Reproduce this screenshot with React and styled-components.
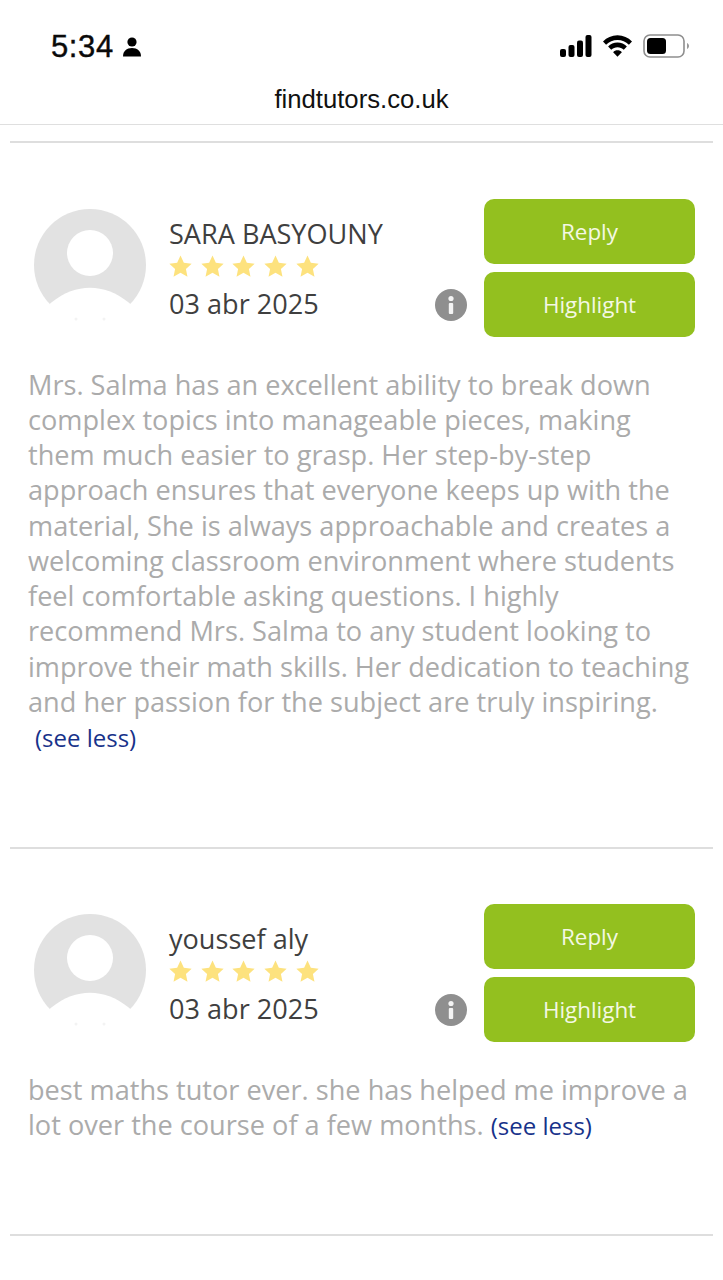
import React from "react";
import styled, { createGlobalStyle } from "styled-components";

const GlobalStyle = createGlobalStyle`
  html, body {
    margin: 0;
    padding: 0;
    background: #fff;
  }
  body {
    font-family: "Open Sans", "Liberation Sans", sans-serif;
  }
`;

const Page = styled.div`
  width: 723px;
  height: 1280px;
  overflow: hidden;
  background: #fff;
`;

const StatusBar = styled.div`
  height: 84px;
  box-sizing: border-box;
  padding: 27px 34px 0 51px;
  display: flex;
  align-items: flex-start;
  justify-content: space-between;
`;

const Time = styled.div`
  display: flex;
  align-items: center;
  gap: 8px;
  height: 38px;
  padding-top: 1px;
  font-family: "Liberation Sans", Arial, sans-serif;
  font-size: 31px;
  letter-spacing: 0.6px;
  -webkit-text-stroke: 0.4px #0a0a0a;
  color: #0a0a0a;
`;

const StatusIcons = styled.div`
  display: flex;
  align-items: center;
  gap: 11px;
  height: 38px;
`;

const AddressBar = styled.div`
  height: 41px;
  box-sizing: border-box;
  display: flex;
  align-items: center;
  justify-content: center;
  font-family: "Liberation Sans", Arial, sans-serif;
  font-size: 25.7px;
  color: #111;
  border-bottom: 1px solid #dfdfdf;
  padding-bottom: 9px;
`;

const Divider = styled.hr`
  margin: ${(p) => p.$top}px 10px 0 10px;
  border: 0;
  height: 2px;
  background: #dedede;
`;

const Review = styled.section`
  padding: ${(p) => p.$top}px 28px 0 28px;
  height: ${(p) => p.$height}px;
  box-sizing: border-box;
`;

const Head = styled.div`
  display: flex;
  align-items: flex-start;
  height: 138px;
`;

const Avatar = styled.svg`
  width: 112px;
  height: 122px;
  margin: 10px 0 0 6px;
  flex: none;
`;

const Info = styled.div`
  margin-left: 23px;
  width: 267px;
  padding-top: 16px;
`;

const Name = styled.div`
  font-size: 27.1px;
  line-height: 38px;
  color: #3f3f3f;
`;

const Stars = styled.div`
  display: flex;
  gap: 6.7px;
  height: 27px;
  margin-left: -1px;
  align-items: center;
`;

const DateLine = styled.div`
  font-size: 27.1px;
  line-height: 42px;
  color: #3f3f3f;
  margin-top: 3px;
`;

const InfoBadge = styled.svg`
  width: 32px;
  height: 32px;
  flex: none;
  margin: 90px 17px 0 0;
`;

const Buttons = styled.div`
  display: flex;
  flex-direction: column;
  gap: 8px;
`;

const Action = styled.div`
  width: 211px;
  height: 65px;
  box-sizing: border-box;
  padding-bottom: 1px;
  border-radius: 10px;
  background: #93c01f;
  color: #f4f8e4;
  font-size: 22.4px;
  display: flex;
  align-items: center;
  justify-content: center;
`;

const Body = styled.p`
  margin: 29.5px 0 0 0;
  font-size: 27.15px;
  line-height: 35.25px;
  color: #ababab;
`;

const SeeLess = styled.span`
  font-size: 24px;
  color: #17328a;
  margin-left: ${(p) => p.$indent}px;
`;

const reviews = [
  {
    name: "SARA BASYOUNY",
    date: "03 abr 2025",
    top: 56,
    height: 704,
    lines: [
      "Mrs. Salma has an excellent ability to break down",
      "complex topics into manageable pieces, making",
      "them much easier to grasp. Her step-by-step",
      "approach ensures that everyone keeps up with the",
      "material, She is always approachable and creates a",
      "welcoming classroom environment where students",
      "feel comfortable asking questions. I highly",
      "recommend Mrs. Salma to any student looking to",
      "improve their math skills. Her dedication to teaching",
      "and her passion for the subject are truly inspiring.",
    ],
    breakBefore: true,
  },
  {
    name: "youssef aly",
    date: "03 abr 2025",
    top: 55,
    height: 385,
    lines: [
      "best maths tutor ever. she has helped me improve a",
      "lot over the course of a few months.",
    ],
    breakBefore: false,
  },
];

function Star() {
  return (
    <svg width="25" height="25" viewBox="0 0 24 24">
      <path
        d="M12 1.5l3.2 6.9 7.5.9-5.5 5.1 1.5 7.4L12 18.1l-6.7 3.7 1.5-7.4L1.3 9.3l7.5-.9z"
        fill="#fde27e"
      />
    </svg>
  );
}

function ReviewCard({ review }) {
  return (
    <Review $top={review.top} $height={review.height}>
      <Head>
        <Avatar viewBox="0 0 112 122">
          <circle cx="56" cy="56" r="56" fill="#e2e2e2" />
          <circle cx="56" cy="44" r="23" fill="#fff" />
          <path d="M0 122V108L18 93C42 74 70 74 94 93L112 108V122z" fill="#fff" />
          <circle cx="42" cy="110" r="1.500" fill="#f3f3f3" />
          <circle cx="70" cy="110" r="1.500" fill="#f3f3f3" />
        </Avatar>
        <Info>
          <Name>{review.name}</Name>
          <Stars>
            {[0, 1, 2, 3, 4].map((i) => (
              <Star key={i} />
            ))}
          </Stars>
          <DateLine>{review.date}</DateLine>
        </Info>
        <InfoBadge viewBox="0 0 32 32">
          <circle cx="16" cy="16" r="16" fill="#8f8f8f" />
          <circle cx="16" cy="9.500" r="2.600" fill="#f4f4f4" />
          <rect x="13.800" y="14" width="4.400" height="11" rx="1" fill="#f4f4f4" />
        </InfoBadge>
        <Buttons>
          <Action>Reply</Action>
          <Action>Highlight</Action>
        </Buttons>
      </Head>
      <Body>
        {review.lines.map((line, i) => (
          <React.Fragment key={i}>
            {line}
            {i < review.lines.length - 1 || review.breakBefore ? <br /> : " "}
          </React.Fragment>
        ))}
        <SeeLess $indent={review.breakBefore ? 7 : 0}>(see less)</SeeLess>
      </Body>
    </Review>
  );
}

export default function App() {
  return (
    <Page>
      <GlobalStyle />
      <StatusBar>
        <Time>
          5:34
          <svg width="20" height="20" viewBox="0 0 20 20">
            <circle cx="10" cy="5" r="4.600" fill="#000" />
            <path d="M1 19.500c0-5.500 3.600-8.500 9-8.500s9 3 9 8.500z" fill="#000" />
          </svg>
        </Time>
        <StatusIcons>
          <svg width="32" height="22" viewBox="0 0 32 22">
            <rect x="0" y="14" width="6" height="8" rx="2" fill="#000" />
            <rect x="8.500" y="10" width="6" height="12" rx="2" fill="#000" />
            <rect x="17" y="5.500" width="6" height="16.500" rx="2" fill="#000" />
            <rect x="25.500" y="0" width="6" height="22" rx="2" fill="#000" />
          </svg>
          <svg width="29" height="22" viewBox="0 0 30 22">
            <path d="M15 0C9 0 4 2.400 0 6.300l3.200 3.400C6.400 6.500 10.400 4.800 15 4.800s8.600 1.700 11.800 4.900L30 6.300C26 2.400 21 0 15 0z" fill="#000" />
            <path d="M15 7.500C11.200 7.500 7.800 9 5.300 11.500l3.200 3.400C10.200 13.200 12.500 12.300 15 12.300s4.800.9 6.500 2.600l3.200-3.400C22.200 9 18.800 7.500 15 7.500z" fill="#000" />
            <path d="M15 15.500c-1.800 0-3.400.7-4.500 1.900L15 22l4.500-4.600c-1.100-1.200-2.700-1.900-4.500-1.900z" fill="#000" />
          </svg>
          <svg width="46" height="24" viewBox="0 0 46 24">
            <rect x="1" y="1" width="40" height="22" rx="6" fill="none" stroke="#8e8e8e" strokeWidth="1.600" />
            <rect x="4" y="4" width="19" height="16" rx="3.500" fill="#000" />
            <path d="M44 9c1.200.5 2 1.600 2 3s-.8 2.500-2 3z" fill="#9a9a9a" />
          </svg>
        </StatusIcons>
      </StatusBar>
      <AddressBar>findtutors.co.uk</AddressBar>
      <Divider $top={16} />
      <ReviewCard review={reviews[0]} />
      <Divider $top={0} />
      <ReviewCard review={reviews[1]} />
      <Divider $top={0} />
    </Page>
  );
}
